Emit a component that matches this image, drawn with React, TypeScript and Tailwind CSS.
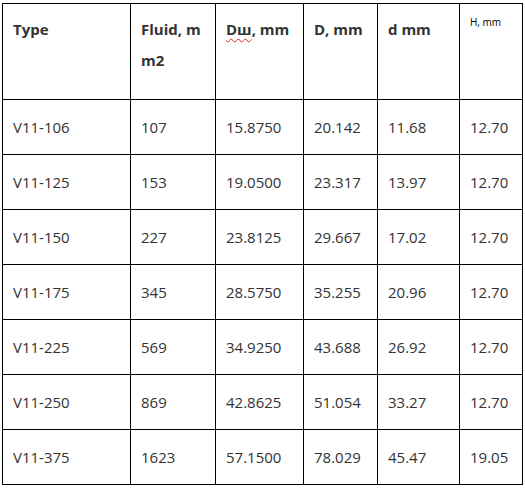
import React from "react";

const rows = [
  ["V11-106", "107", "15.8750", "20.142", "11.68", "12.70"],
  ["V11-125", "153", "19.0500", "23.317", "13.97", "12.70"],
  ["V11-150", "227", "23.8125", "29.667", "17.02", "12.70"],
  ["V11-175", "345", "28.5750", "35.255", "20.96", "12.70"],
  ["V11-225", "569", "34.9250", "43.688", "26.92", "12.70"],
  ["V11-250", "869", "42.8625", "51.054", "33.27", "12.70"],
  ["V11-375", "1623", "57.1500", "78.029", "45.47", "19.05"],
];

const widths = ["w-[128px]", "w-[85px]", "w-[88px]", "w-[74px]", "w-[82px]", "w-[63px]"];

export default function App() {
  return (
    <div className="w-[525px] h-[488px] bg-white pt-[3px] pl-[2px]" style={{ fontFamily: '"Open Sans", "Noto Sans", sans-serif' }}>
      <table className="border-collapse table-fixed w-[521px] text-[15px] text-[#333]">
        <colgroup>
          {widths.map((w, i) => (
            <col key={i} className={w} />
          ))}
        </colgroup>
        <thead>
          <tr className="h-[96px]">
            <th className="border border-black align-top text-left font-bold pl-[10px] pr-[8px] pt-[10px] leading-[31px]">Type</th>
            <th className="border border-black align-top text-left font-bold pl-[10px] pr-[8px] pt-[10px] leading-[31px]">Fluid, m m2</th>
            <th className="border border-black align-top text-left font-bold pl-[10px] pr-[4px] pt-[10px] leading-[31px] whitespace-nowrap">
              <span className="underline decoration-wavy decoration-[#e02020] decoration-1 underline-offset-[3px]">Dш</span>, mm
            </th>
            <th className="border border-black align-top text-left font-bold pl-[10px] pr-[4px] pt-[10px] leading-[31px] whitespace-nowrap">D, mm</th>
            <th className="border border-black align-top text-left font-bold pl-[10px] pr-[4px] pt-[10px] leading-[31px] whitespace-nowrap">d mm</th>
            <th className="border border-black align-top text-left font-normal text-[10px] text-black pl-[10px] pt-[10px] leading-[16px] whitespace-nowrap">H, mm</th>
          </tr>
        </thead>
        <tbody>
          {rows.map((r, i) => (
            <tr key={i} className="h-[55px]">
              {r.map((c, j) => (
                <td key={j} className="border border-black align-middle pl-[10px] pr-[4px] whitespace-nowrap">
                  {c}
                </td>
              ))}
            </tr>
          ))}
        </tbody>
      </table>
    </div>
  );
}
